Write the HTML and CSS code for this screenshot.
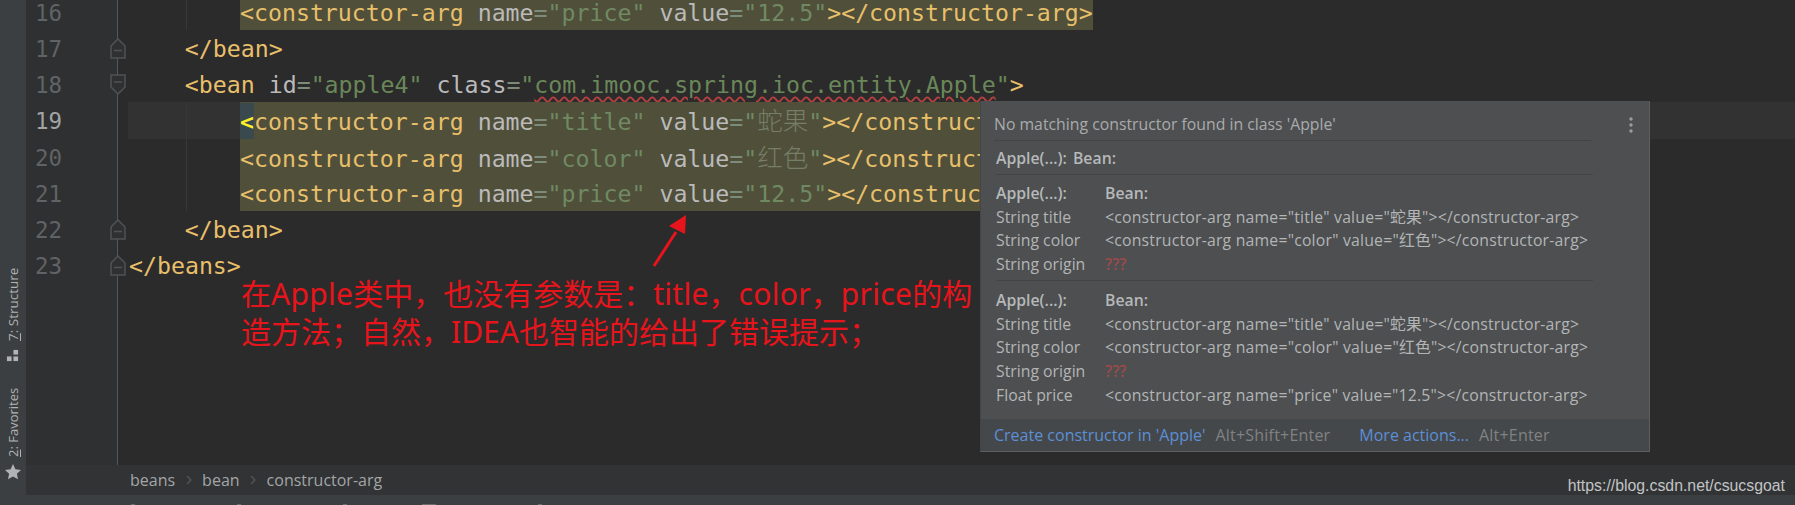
FILE: index.html
```html
<!DOCTYPE html>
<html lang="zh">
<head>
<meta charset="utf-8">
<title>Spring XML editor</title>
<link rel="stylesheet" href="styles.css">
</head>
<body>
<div class="app">
  <div class="workspace">
    <aside class="toolbar">
      <div class="tool">
        <svg class="tool-icon" width="13" height="13" viewBox="0 0 14 14"><rect x="1" y="8" width="5" height="5"/><rect x="8" y="8" width="5" height="5"/><rect x="8" y="1" width="5" height="5"/></svg>
        <span class="tool-label"><u>7</u>: Structure</span>
      </div>
      <div class="tool tool-fav">
        <svg class="tool-icon" width="16" height="16" viewBox="0 0 16 16"><path d="M8 0l2.4 5.2 5.6.7-4.1 3.8 1.1 5.6L8 12.5l-5 2.8 1.1-5.6L0 5.900l5.600-.7z"/></svg>
        <span class="tool-label"><u>2</u>: Favorites</span>
      </div>
    </aside>
    <main class="editor">
      <div class="rows">
        <div class="row"><div class="gutter">16</div><div class="code guide"><span class="i2"></span><span class="band"><span class="t">&lt;constructor-arg</span> <span class="a">name</span><span class="e">=</span><span class="s">"price"</span> <span class="a">value</span><span class="e">=</span><span class="s">"12.5"</span><span class="t">&gt;&lt;/constructor-arg&gt;</span></span></div></div>
        <div class="row"><div class="gutter">17<svg class="fold" width="16" height="21" viewBox="0 0 16 21"><path d="M1 8L8 1l7 7v12H1zM4 12.500h8"/></svg></div><div class="code"><span class="i1"></span><span class="t">&lt;/bean&gt;</span></div></div>
        <div class="row"><div class="gutter">18<svg class="fold" width="16" height="21" viewBox="0 0 16 21"><path d="M1 1h14v12l-7 7-7-7zM4 8h8"/></svg></div><div class="code"><span class="i1"></span><span class="t">&lt;bean</span> <span class="a">id</span><span class="e">=</span><span class="s">"apple4"</span> <span class="a">class</span><span class="e">=</span><span class="s">"</span><span class="s wavy">com.imooc.spring.ioc.entity.Apple</span><span class="s">"</span><span class="t">&gt;</span></div></div>
        <div class="row row-current"><div class="gutter gutter-current">19</div><div class="code guide"><span class="i2 i-current"></span><span class="band band-wide"><span class="caret">&lt;</span><span class="t">constructor-arg</span> <span class="a">name</span><span class="e">=</span><span class="s">"title"</span> <span class="a">value</span><span class="e">=</span><span class="s">"<span class="cjk">蛇果</span>"</span><span class="t">&gt;&lt;/constructor-arg&gt;</span></span></div></div>
        <div class="row"><div class="gutter">20</div><div class="code guide"><span class="i2"></span><span class="band band-wide"><span class="t">&lt;constructor-arg</span> <span class="a">name</span><span class="e">=</span><span class="s">"color"</span> <span class="a">value</span><span class="e">=</span><span class="s">"<span class="cjk">红色</span>"</span><span class="t">&gt;&lt;/constructor-arg&gt;</span></span></div></div>
        <div class="row"><div class="gutter">21</div><div class="code guide"><span class="i2"></span><span class="band band-wide"><span class="t">&lt;constructor-arg</span> <span class="a">name</span><span class="e">=</span><span class="s">"price"</span> <span class="a">value</span><span class="e">=</span><span class="s">"12.5"</span><span class="t">&gt;&lt;/constructor-arg&gt;</span></span></div></div>
        <div class="row"><div class="gutter">22<svg class="fold" width="16" height="21" viewBox="0 0 16 21"><path d="M1 8L8 1l7 7v12H1zM4 12.500h8"/></svg></div><div class="code"><span class="i1"></span><span class="t">&lt;/bean&gt;</span></div></div>
        <div class="row"><div class="gutter">23<svg class="fold" width="16" height="21" viewBox="0 0 16 21"><path d="M1 8L8 1l7 7v12H1zM4 12.500h8"/></svg></div><div class="code"><span class="t">&lt;/beans&gt;</span></div></div>
        <div class="row row-fill"><div class="gutter"></div><div class="code"></div></div>
      </div>
      <nav class="crumbs">
        <span>beans</span>
        <svg class="chev" width="6" height="10" viewBox="0 0 6 10"><path d="M1 1l4 4-4 4"/></svg>
        <span>bean</span>
        <svg class="chev" width="6" height="10" viewBox="0 0 6 10"><path d="M1 1l4 4-4 4"/></svg>
        <span>constructor-arg</span>
      </nav>
    </main>
  </div>
  <footer class="status"><i class="tick"></i><i class="tick"></i><i class="tick"></i><i class="tick tick-wide"></i><i class="tick"></i></footer>

  <p class="note">在<span class="lat">Apple</span>类中，也没有参数是：<span class="lat">title</span>，<span class="lat">color</span>，<span class="lat">price</span>的构<br>造方法；自然，IDEA也智能的给出了错误提示；</p>
  <svg class="arrow" width="40" height="56" viewBox="0 0 40 56"><path class="arrow-shaft" d="M2 53L24 19"/><path class="arrow-head" d="M34 2L33 21 17 13z"/></svg>
  <p class="mark">https://blog.csdn.net/csucsgoat</p>

  <section class="popup">
    <div class="popup-body">
      <div class="popup-title"><span>No matching constructor found in class 'Apple'</span>
        <svg class="kebab" width="4" height="16" viewBox="0 0 4 16"><circle cx="2" cy="2" r="1.700"/><circle cx="2" cy="8" r="1.700"/><circle cx="2" cy="14" r="1.700"/></svg>
      </div>
      <div class="summary"><b>Apple(...):</b> <b>Bean:</b></div>
      <div class="group">
        <div class="cols"><b>Apple(...):</b><b>Bean:</b></div>
        <div class="cols"><span>String title</span><span class="xml">&lt;constructor-arg name="title" value="蛇果"&gt;&lt;/constructor-arg&gt;</span></div>
        <div class="cols"><span>String color</span><span class="xml">&lt;constructor-arg name="color" value="红色"&gt;&lt;/constructor-arg&gt;</span></div>
        <div class="cols"><span>String origin</span><span class="missing">???</span></div>
      </div>
      <div class="group group-last">
        <div class="cols"><b>Apple(...):</b><b>Bean:</b></div>
        <div class="cols"><span>String title</span><span class="xml">&lt;constructor-arg name="title" value="蛇果"&gt;&lt;/constructor-arg&gt;</span></div>
        <div class="cols"><span>String color</span><span class="xml">&lt;constructor-arg name="color" value="红色"&gt;&lt;/constructor-arg&gt;</span></div>
        <div class="cols"><span>String origin</span><span class="missing">???</span></div>
        <div class="cols"><span>Float price</span><span class="xml">&lt;constructor-arg name="price" value="12.5"&gt;&lt;/constructor-arg&gt;</span></div>
      </div>
    </div>
    <div class="popup-foot">
      <span class="link">Create constructor in 'Apple'</span><span class="key">Alt+Shift+Enter</span>
      <span class="link link-more">More actions...</span><span class="key">Alt+Enter</span>
    </div>
  </section>
</div>
</body>
</html>
```

FILE: styles.css
```css
* { box-sizing: border-box; }
html, body { margin: 0; padding: 0; background: #2b2b2b; }
.app {
  position: relative;
  width: 1795px;
  height: 505px;
  overflow: hidden;
  display: flex;
  flex-direction: column;
  font-family: "Open Sans", "Noto Sans CJK SC", sans-serif;
}
.workspace { flex: 1; display: flex; min-height: 0; }

.toolbar {
  width: 26px;
  flex: none;
  background: #3c3f41;
  display: flex;
  flex-direction: column;
  align-items: center;
  padding-top: 266px;
  color: #b0b2b4;
}
.tool {
  writing-mode: vertical-rl;
  transform: rotate(180deg);
  display: flex;
  align-items: center;
  gap: 8px;
  font-size: 13.500px;
  white-space: nowrap;
  height: 96px;
  justify-content: flex-start;
}
.tool-fav { margin-top: 20px; height: 98px; font-size: 13px; gap: 7px; }
.tool-icon { fill: #b0b2b4; transform: rotate(180deg); flex: none; }
.tool-label { line-height: 14px; }

.editor { flex: 1; display: flex; flex-direction: column; min-width: 0; }
.rows { flex: 1; margin-top: -6.200px; display: flex; flex-direction: column; min-height: 0; }
.row {
  height: 36.200px;
  flex: none;
  display: flex;
  font-family: "DejaVu Sans Mono", "Noto Sans CJK SC", monospace;
  font-size: 23.220px;
  line-height: 38px;
}
.row-fill { flex: 1; height: auto; }
.gutter {
  position: relative;
  width: 92px;
  flex: none;
  padding-left: 9px;
  color: #606366;
  background: #2f3031;
  border-right: 1px solid #55585a;
  font-size: 22.500px;
}
.gutter-current { color: #a4a3a3; }
.fold {
  position: absolute;
  right: -9px;
  top: 8px;
  fill: #2f3031;
  stroke: #505254;
  stroke-width: 1.500;
}
.code { flex: 1; display: block; white-space: pre; position: relative; padding-left: 11px; color: #b9bcc0; }
.guide::before {
  content: "";
  position: absolute;
  left: 68px;
  top: 0;
  bottom: 0;
  width: 1px;
  background: #373839;
}
.i1 { display: inline-block; width: 55.800px; }
.i2 { display: inline-block; width: 111px; }
.row-current .code { background: #323232; margin-left: 10px; padding-left: 1px; }
.row-current .guide::before { left: 58px; }
.band { display: inline-block; height: 36.200px; background: #4f4f3a; vertical-align: top; }
.band-wide { min-width: 900px; }
.caret { display: inline-block; color: #ffef28; font-weight: 700; background: #39494d; }
.t { color: #e8bf6a; }
.a { color: #bababa; }
.e { color: #7d8c7a; }
.s { color: #6a8759; }
.band .s { color: #6f8a63; }
.band .cjk { font-size: 25.500px; color: #777e68; font-weight: 300; }
.wavy { text-decoration: underline wavy #b3403f; text-decoration-thickness: 1.500px; text-underline-offset: 3px; }

.crumbs {
  height: 30px;
  flex: none;
  background: #313335;
  display: flex;
  align-items: center;
  padding-left: 104px;
  gap: 10.500px;
  color: #a3a5a7;
  font-size: 16px;
}
.chev { fill: none; stroke: #55585a; stroke-width: 1.200; }
.status {
  height: 10px;
  flex: none;
  background: #3c3f41;
  display: flex;
  align-items: flex-end;
  padding-left: 131px;
  gap: 102px;
}
.tick { display: block; width: 4px; height: 1px; background: #6a6c6e; }
.tick-wide { width: 14px; margin-left: -27px; }

.note {
  position: absolute;
  left: 241px;
  top: 275px;
  margin: 0;
  color: #e8141c;
  font-family: "Noto Sans", "Noto Sans CJK SC", sans-serif;
  font-size: 30px;
  line-height: 38px;
  white-space: nowrap;
}
.lat { letter-spacing: 0.280px; }
.arrow { position: absolute; left: 652px; top: 213px; }
.arrow-shaft { stroke: #e8141c; stroke-width: 3; fill: none; }
.arrow-head { fill: #e8141c; }
.mark {
  position: absolute;
  right: 10px;
  top: 476px;
  margin: 0;
  color: #c2c4c5;
  font-family: "Liberation Sans", sans-serif;
  font-size: 15.830px;
  line-height: 20px;
}

.popup {
  position: absolute;
  left: 980px;
  top: 101px;
  width: 670px;
  height: 351px;
  background: #4d4f50;
  border-right: 1px solid #5c5e60;
  border-bottom: 1px solid #5c5e60;
  border-left: 1px solid #434546;
  display: flex;
  flex-direction: column;
  color: #b3b5b7;
  font-size: 15.800px;
  line-height: 24px;
}
.popup-body { flex: 1; padding: 0 0 0 15px; }
.popup-title {
  height: 40px;
  width: 597px;
  margin-left: -2px;
  display: flex;
  align-items: center;
  padding-top: 6px;
  border-bottom: 1px solid #424445;
  position: relative;
  color: #a9abad;
}
.kebab { position: absolute; left: 635px; top: 16px; fill: #9a9c9e; }
.summary {
  height: 34px;
  width: 597px;
  border-bottom: 1px solid #424445;
  display: flex;
  align-items: center;
  gap: 6px;
}
.popup b { font-weight: 600; color: #b6b8ba; }
.group {
  width: 597px;
  height: 106px;
  padding-top: 6px;
  border-bottom: 1px solid #424445;
}
.group-last { border-bottom: 0; padding-top: 7px; height: auto; }
.cols { display: flex; height: 23.700px; white-space: nowrap; }
.cols > :first-child { width: 109px; flex: none; }
.xml { letter-spacing: 0.200px; }
.missing { color: #9c4a4a; font-weight: 600; }
.popup-foot {
  height: 32px;
  flex: none;
  background: #45484a;
  display: flex;
  align-items: center;
  padding-left: 13px;
  white-space: nowrap;
  font-size: 16px;
}
.link { color: #5c8fd6; }
.link-more { margin-left: 29px; }
.key { margin-left: 10px; color: #808284; letter-spacing: 0.200px; }
```
